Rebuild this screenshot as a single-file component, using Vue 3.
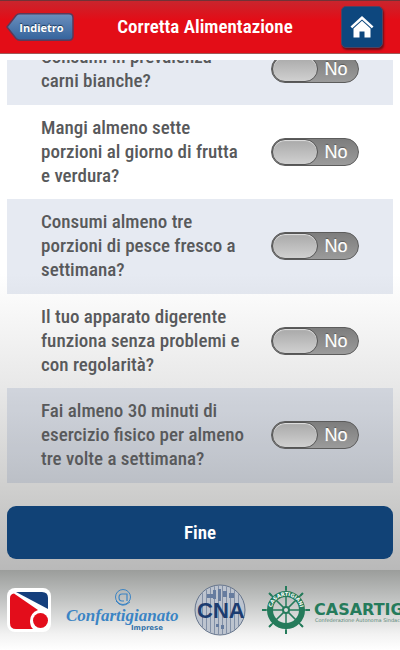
<script setup>
import { ref } from 'vue'

const questions = ref([
  { id: 'carni', text: 'Consumi in prevalenza carni bianche?', yes: false },
  { id: 'frutta', text: 'Mangi almeno sette porzioni al giorno di frutta e verdura?', yes: false },
  { id: 'pesce', text: 'Consumi almeno tre porzioni di pesce fresco a settimana?', yes: false },
  { id: 'digestione', text: 'Il tuo apparato digerente funziona senza problemi e con regolarità?', yes: false },
  { id: 'esercizio', text: 'Fai almeno 30 minuti di esercizio fisico per almeno tre volte a settimana?', yes: false }
])
const spokes = [0, 45, 90, 135, 180, 225, 270, 315]
const stripes = [202, 206, 210, 214, 218, 222, 226, 230, 234, 238]
</script>

<template>
  <div class="page">
    <header class="bar">
      <a class="back" href="#indietro">
        <svg class="back-shape" viewBox="0 0 68 28" preserveAspectRatio="none" aria-hidden="true">
          <defs>
            <linearGradient id="backFill" x1="0" y1="0" x2="0" y2="1">
              <stop offset="0" stop-color="#6b8fbd" />
              <stop offset="1" stop-color="#34639c" />
            </linearGradient>
          </defs>
          <path d="M1 14 L10 2.5 Q11.500 .8 14 .8 H63 Q67 .8 67 5 V23 Q67 27.200 63 27.200 H14 Q11.500 27.200 10 25.500 Z" fill="url(#backFill)" stroke="#5b3a59" stroke-width="1.500" />
        </svg>
        <span class="back-text">Indietro</span>
      </a>
      <h1 class="title">Corretta Alimentazione</h1>
      <a class="home" href="#home" aria-label="Home">
        <svg viewBox="0 0 24 24" width="24" height="24" aria-hidden="true">
          <path d="M12 1 L0.500 11.500 L2.200 13.300 L12 4.400 L21.800 13.300 L23.500 11.500 Z" fill="#fff" />
          <path d="M3.500 13.500 L12 5.700 L20.500 13.500 V22.500 H14.500 V16.500 H9.500 V22.500 H3.500 Z" fill="#fff" />
        </svg>
      </a>
    </header>

    <main class="content">
      <ul class="questions">
        <li v-for="q in questions" :key="q.id" class="row">
          <label class="question" :for="q.id">{{ q.text }}</label>
          <label class="switch" :class="{ on: q.yes }">
            <input :id="q.id" v-model="q.yes" class="switch-input" type="checkbox" />
            <span class="knob"></span>
            <span class="state">{{ q.yes ? 'Sì' : 'No' }}</span>
          </label>
        </li>
      </ul>
      <button class="done" type="button">Fine</button>
    </main>

    <footer class="partners">
      <svg class="logos" viewBox="0 0 440 80" width="440" height="80">
        <rect x="7" y="18" width="44" height="44" rx="8" fill="#fff" />
        <path d="M16 22 H42 Q48 22 48 28 V39 Z" fill="#153f7c" />
        <path d="M14 23.500 L38 40 Q30 43 30 51 Q30 56 33 59 H16 Q10 59 10 53 V28 Q10 24 14 23.500 Z" fill="#e30d1b" />
        <circle cx="40.500" cy="50.500" r="7.500" fill="#e30d1b" />

        <g fill="none" stroke="#3b84c4">
          <circle cx="123" cy="27" r="7.500" stroke-width="1" />
          <path d="M127 31 V24 H122 Q119 24 119 27.500 Q119 31 122 31 H124" stroke-width="1.200" />
          <path d="M116 31 Q122 39 130 32" stroke-width="1" />
        </g>
        <text class="confart" x="66" y="51">Confartigianato</text>
        <text class="imprese" x="131" y="60">Imprese</text>

        <clipPath id="cnaClip"><circle cx="220" cy="40" r="24.500" /></clipPath>
        <circle cx="220" cy="40" r="25" fill="#bdc4cf" stroke="#66758c" stroke-width="1" />
        <g clip-path="url(#cnaClip)">
          <rect v-for="x in stripes" :key="x" :x="x" y="15" width="1" height="50" fill="#8290a7" />
          <path d="M207 24 h6 v4 h-6 z M213 20 h3 v9 h-3 z M218 19 h3 v12 h-3 z M223 21 h4 v6 h-4 z M229 23 h5 v5 h-5 z M216 54 h3 v3 h-3 z M221 55 h3 v4 h-3 z" fill="#667c9f" />
        </g>
        <text class="cna" x="197" y="48">CNA</text>

        <g transform="translate(286 40)">
          <g fill="none" stroke="#257b5b">
            <g v-for="a in spokes" :key="a" :transform="`rotate(${a})`">
              <path d="M0 -3 V-23" stroke-width="1.500" />
              <path d="M0 -20 V-24" stroke-width="2" />
            </g>
            <circle r="16" stroke-width="6" />
            <circle r="3" stroke-width="2" />
          </g>
          <circle r="1.500" fill="#d8dcda" />
          <path id="wheelArc" d="M-14 4 A14.500 14.500 0 1 1 14 4" fill="none" />
          <text class="wheel"><textPath href="#wheelArc" startOffset="50%" text-anchor="middle">CASARTIGIANI</textPath></text>
        </g>
        <text class="casart" x="314" y="45">CASARTIGIANI</text>
        <text class="casart-sub" x="315" y="52">Confederazione Autonoma Sindacati</text>
      </svg>
    </footer>
  </div>
</template>

<style>
body {
  margin: 0;
  overflow-x: hidden;
}
</style>

<style scoped>
.page {
  min-height: 100vh;
  display: flex;
  flex-direction: column;
  overflow: hidden;
  font-family: "Liberation Sans Narrow", "Roboto Condensed", "Liberation Sans", sans-serif;
  background: #fff;
}
.bar {
  box-sizing: border-box;
  height: 54px;
  display: grid;
  grid-template-columns: 84px 1fr 64px;
  align-items: center;
  border-top: 1px solid #713236;
  border-bottom: 1px solid #9d5a58;
  background: linear-gradient(#c9252d, #e30d17 36%, #e30d17);
}
.back {
  position: relative;
  display: flex;
  align-items: center;
  justify-content: center;
  width: 68px;
  height: 28px;
  margin-left: 6px;
  color: #fff;
  text-decoration: none;
}
.back-shape {
  position: absolute;
  inset: 0;
  width: 100%;
  height: 100%;
}
.back-text {
  position: relative;
  padding-left: 3px;
  font: bold 11px "Open Sans", sans-serif;
  text-shadow: 0 -1px 1px #173456;
}
.title {
  margin: 0;
  padding-right: 10px;
  color: #fff;
  font-size: 19px;
  font-weight: 600;
  line-height: 24px;
  text-align: center;
  white-space: nowrap;
}
.home {
  display: flex;
  align-items: center;
  justify-content: center;
  box-sizing: border-box;
  width: 42px;
  height: 42px;
  margin-left: 5px;
  border: 1px solid #53415f;
  border-radius: 5px;
  background: #0d477e;
  box-shadow: 1px 2px 2px #69101a;
}
.content {
  flex: 1;
  margin-top: 6px;
  padding: 0 7px 11px;
  background: linear-gradient(#fff 42%, #e8e8e8 64%, #cfcfce 84%, #b9b9b9);
}
.questions {
  margin: 0;
  padding: 0;
  list-style: none;
  overflow: hidden;
}
.row {
  display: flex;
  align-items: center;
  justify-content: space-between;
  padding: 11px 34px;
}
.row:nth-child(odd) {
  padding-bottom: 12px;
  background: rgba(5, 45, 125, 0.1);
}
.row:first-child {
  margin-top: -27px;
  padding-top: 12px;
}
.question {
  flex: 0 1 206px;
  color: #58595b;
  font-size: 19px;
  font-weight: 500;
  line-height: 24px;
}
.switch {
  position: relative;
  flex: none;
  display: flex;
  align-items: center;
  box-sizing: border-box;
  width: 88px;
  height: 28px;
  border: 1px solid #5c5c5c;
  border-radius: 14px;
  background: linear-gradient(#7d7d7d, #8c8c8c 50%, #9b9b9b);
}
.switch.on {
  flex-direction: row-reverse;
}
.switch-input {
  position: absolute;
  inset: 0;
  width: 100%;
  height: 100%;
  margin: 0;
  opacity: 0;
}
.knob {
  box-sizing: border-box;
  width: 46px;
  height: 26px;
  border: 1px solid #555;
  border-radius: 13px;
  background: linear-gradient(#a9a9a9, #d0d0d0);
  box-shadow: inset 0 1px 1px #e2e2e2;
}
.state {
  flex: 1;
  padding-right: 4px;
  color: #fff;
  font: 18px "Liberation Sans", sans-serif;
  text-align: center;
  text-shadow: 0 -1px 1px #555, 0 0 1px #fff;
}
.done {
  display: block;
  width: 100%;
  height: 53px;
  margin-top: 23px;
  padding: 0;
  border: 0;
  border-radius: 9px;
  background: #114276;
  color: #fff;
  font-family: inherit;
  font-size: 19px;
  font-weight: 600;
}
.partners {
  height: 80px;
  overflow: hidden;
  background: linear-gradient(#9b9d9b, #bfc1c0 35%, #f2f2f2 80%, #fff);
}
.logos {
  display: block;
}
.confart {
  fill: #3b84c4;
  font: italic bold 17px "Liberation Serif", serif;
}
.imprese {
  fill: #3673a8;
  font: bold 7px "DejaVu Sans", sans-serif;
}
.cna {
  fill: #1c3c70;
  font: bold 22px "Liberation Sans", sans-serif;
}
.wheel {
  fill: #fff;
  font: bold 5px "DejaVu Sans", sans-serif;
}
.casart {
  fill: #257b5b;
  font: bold 16px "DejaVu Sans", sans-serif;
}
.casart-sub {
  fill: #5a8775;
  font: 5px "DejaVu Sans", sans-serif;
}
</style>
